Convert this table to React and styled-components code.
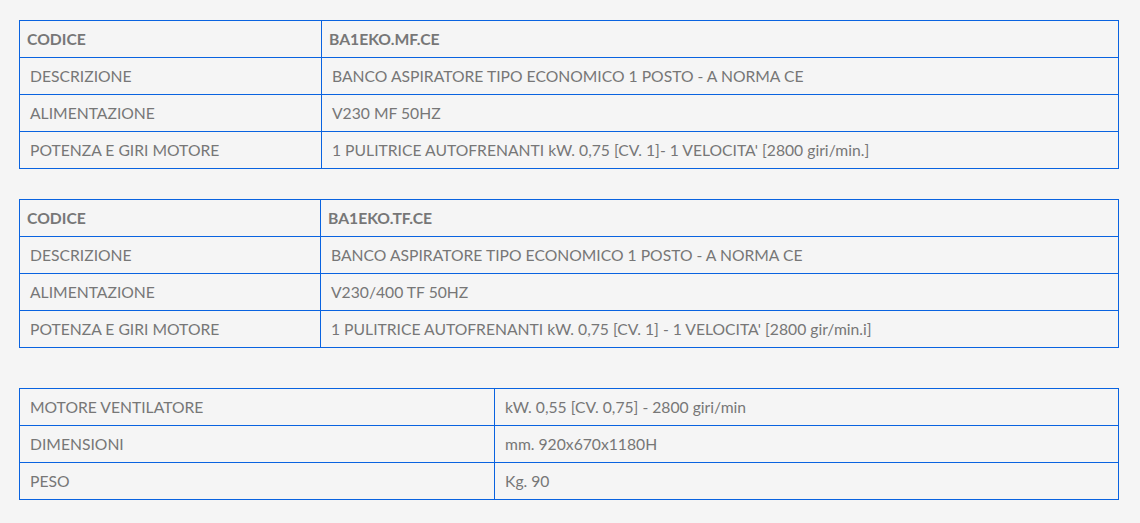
import React from "react";
import styled, { createGlobalStyle } from "styled-components";

const GlobalStyle = createGlobalStyle`
  html, body {
    margin: 0;
    padding: 0;
    background: #f5f5f5;
  }
  body {
    font-family: Lato, "Liberation Sans", sans-serif;
    color: #777;
  }
`;

const Page = styled.div`
  padding: 20px 21px 20px 19px;
  display: flex;
  flex-direction: column;
`;

const SpecTable = styled.table`
  width: 1100px;
  border-collapse: collapse;
  font-size: 15.7px;
  line-height: 20px;
  margin-bottom: ${(p) => p.$gap || 0}px;
`;

const HeadCell = styled.th`
  border: 1px solid #0a63e0;
  padding: 8px 7px;
  text-align: left;
  font-weight: 700;
  color: #777;
`;

const Cell = styled.td`
  border: 1px solid #0a63e0;
  padding: 8px 10px;
  text-align: left;
  font-weight: 400;
  color: #777;
`;

const modelTables = [
  {
    code: "BA1EKO.MF.CE",
    labelWidth: 302,
    rows: [
      ["DESCRIZIONE", "BANCO ASPIRATORE TIPO ECONOMICO 1 POSTO - A NORMA CE"],
      ["ALIMENTAZIONE", "V230 MF 50HZ"],
      ["POTENZA E GIRI MOTORE", "1 PULITRICE AUTOFRENANTI kW. 0,75 [CV. 1]- 1 VELOCITA' [2800 giri/min.]"],
    ],
  },
  {
    code: "BA1EKO.TF.CE",
    labelWidth: 301,
    rows: [
      ["DESCRIZIONE", "BANCO ASPIRATORE TIPO ECONOMICO 1 POSTO - A NORMA CE"],
      ["ALIMENTAZIONE", "V230/400 TF 50HZ"],
      ["POTENZA E GIRI MOTORE", "1 PULITRICE AUTOFRENANTI kW. 0,75 [CV. 1] - 1 VELOCITA' [2800 gir/min.i]"],
    ],
  },
];

const commonRows = [
  ["MOTORE VENTILATORE", "kW. 0,55 [CV. 0,75] - 2800 giri/min"],
  ["DIMENSIONI", "mm. 920x670x1180H"],
  ["PESO", "Kg. 90"],
];

export default function App() {
  return (
    <>
      <GlobalStyle />
      <Page>
        {modelTables.map((t, i) => (
          <SpecTable key={t.code} $gap={i === 0 ? 30 : 40}>
            <colgroup>
              <col style={{ width: t.labelWidth }} />
              <col />
            </colgroup>
            <thead>
              <tr>
                <HeadCell>CODICE</HeadCell>
                <HeadCell>{t.code}</HeadCell>
              </tr>
            </thead>
            <tbody>
              {t.rows.map(([label, value]) => (
                <tr key={label}>
                  <Cell>{label}</Cell>
                  <Cell>{value}</Cell>
                </tr>
              ))}
            </tbody>
          </SpecTable>
        ))}
        <SpecTable>
          <colgroup>
            <col style={{ width: 475 }} />
            <col />
          </colgroup>
          <tbody>
            {commonRows.map(([label, value]) => (
              <tr key={label}>
                <Cell>{label}</Cell>
                <Cell>{value}</Cell>
              </tr>
            ))}
          </tbody>
        </SpecTable>
      </Page>
    </>
  );
}
